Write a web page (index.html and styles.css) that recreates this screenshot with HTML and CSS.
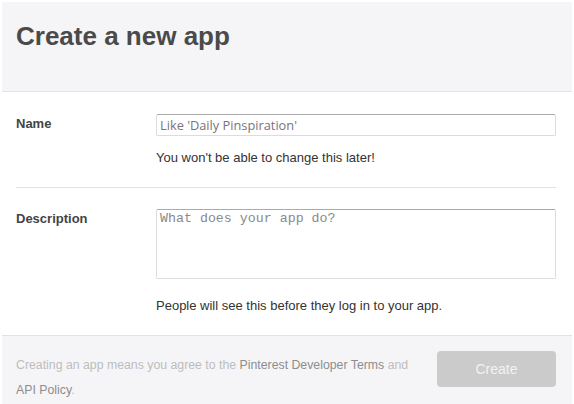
FILE: index.html
```html
<!DOCTYPE html>
<html>
<head>
<meta charset="utf-8">
<link rel="stylesheet" href="styles.css">
</head>
<body>
<div class="modal">
  <div class="header">
    <h1 class="title">Create a new app</h1>
  </div>
  <div class="body">
    <div class="row row-name">
      <div class="label">Name</div>
      <div class="field">
        <input class="input" type="text" placeholder="Like 'Daily Pinspiration'">
        <div class="hint">You won't be able to change this later!</div>
      </div>
    </div>
    <div class="row row-desc">
      <div class="label">Description</div>
      <div class="field">
        <textarea class="textarea" placeholder="What does your app do?"></textarea>
        <div class="hint hint-desc">People will see this before they log in to your app.</div>
      </div>
    </div>
  </div>
  <div class="footer">
    <p class="terms">Creating an app means you agree to the <a class="link" href="#">Pinterest Developer Terms</a> and <a class="link" href="#">API Policy</a>.</p>
    <button class="btn" type="button">Create</button>
  </div>
</div>
</body>
</html>
```
FILE: styles.css
```css
* { box-sizing: border-box; }
html, body { margin: 0; padding: 0; background: #fff; }
body {
  font-family: "Liberation Sans", Arial, sans-serif;
  color: #333;
  font-size: 13px;
}
.modal {
  margin: 2px 2px 0 2px;
  width: 570px;
  height: 402px;
  display: flex;
  flex-direction: column;
  background: #fff;
}
.header {
  background: #f5f5f8;
  height: 90px;
  border-bottom: 1px solid #e3e3e6;
  padding: 19px 14px 0;
}
.title {
  margin: 0;
  font-size: 26px;
  line-height: 30px;
  font-weight: bold;
  color: #4a4a4a;
}
.body {
  padding: 0 16px 0 14px;
}
.row {
  display: flex;
}
.row-name {
  padding: 22px 0 20px;
  border-bottom: 1px solid #e3e3e6;
}
.row-desc {
  padding: 21px 0 20px;
}
.label {
  width: 140px;
  font-weight: bold;
  color: #444;
  line-height: 18px;
  padding-top: 1px;
}
.field {
  flex: 1;
  display: flex;
  flex-direction: column;
}
.input, .textarea {
  display: block;
  width: 400px;
  margin: 0;
  border: 1px solid #dcdcdf;
  border-top-color: #ababab;
  border-radius: 2px;
  background: #fff;
  outline: none;
}
.input {
  height: 22px;
  padding: 0 3px;
  font-family: "Open Sans", "Liberation Sans", sans-serif;
  font-size: 12.8px;
}
.input::placeholder {
  color: #7a737d;
  opacity: 1;
}
.textarea {
  height: 70px;
  padding: 1px 3px;
  resize: none;
  font-family: "Liberation Mono", "Courier New", monospace;
  font-size: 13.3px;
  line-height: 16px;
}
.textarea::placeholder {
  color: #8a8a8a;
  opacity: 1;
}
.hint {
  margin-top: 13px;
  line-height: 18px;
  color: #333;
}
.hint-desc {
  margin-top: 18px;
}
.footer {
  flex: 1;
  background: #f5f5f8;
  border-top: 1px solid #e3e3e6;
  display: flex;
  align-items: flex-start;
  padding: 15px 16px 0 14px;
}
.terms {
  flex: 1;
  margin: 0;
  padding-top: 2px;
  padding-right: 20px;
  font-size: 12.3px;
  line-height: 25px;
  color: #bdbdbd;
}
.link {
  color: #8d8d8d;
  text-decoration: none;
}
.btn {
  width: 119px;
  height: 36px;
  border: none;
  border-radius: 4px;
  background: #cbcbcb;
  color: #f2f2f2;
  font-family: "Liberation Sans", Arial, sans-serif;
  font-size: 14px;
  padding: 0;
}
```
